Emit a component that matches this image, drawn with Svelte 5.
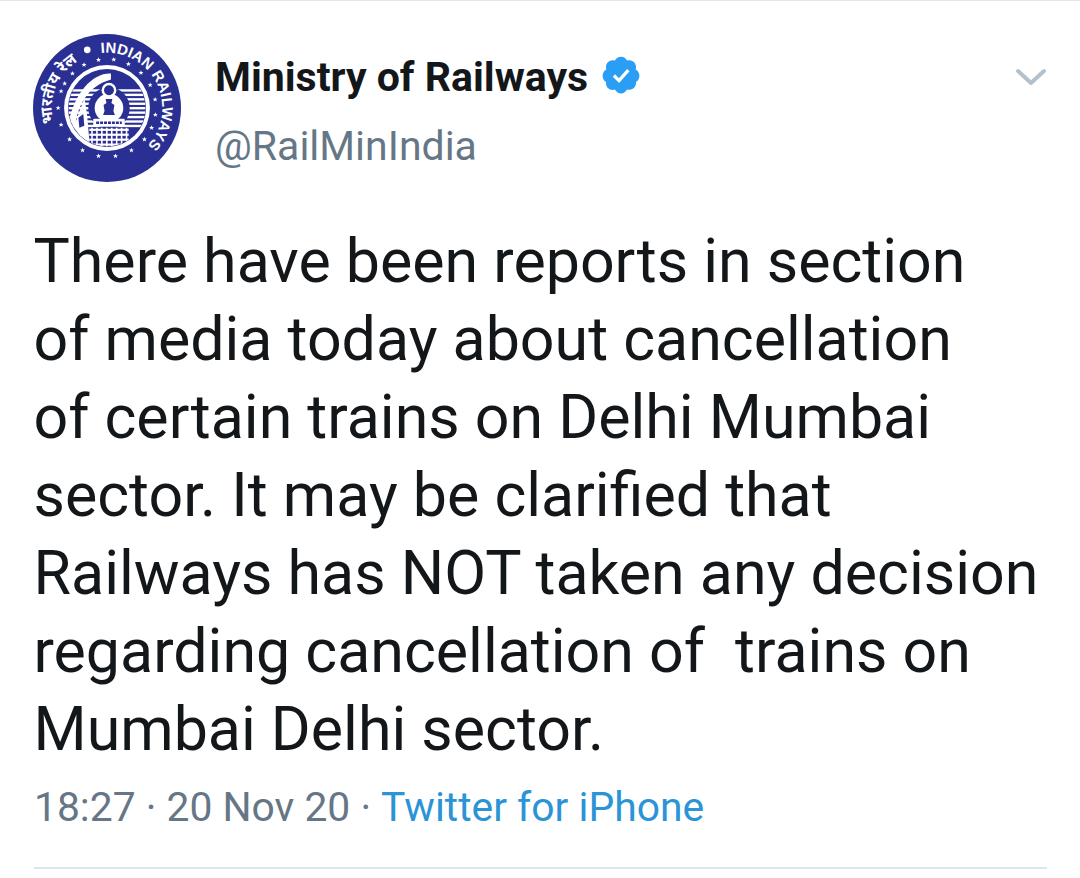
<script>
  const lines = [
    'There have been reports in section',
    'of media today about cancellation',
    'of certain trains on Delhi Mumbai',
    'sector. It may be clarified that',
    'Railways has NOT taken any decision',
    'regarding cancellation of\u00a0 trains on',
    'Mumbai Delhi sector.'
  ];
  const starAt = [-150,-135,-118,-100,-82,-64,-46,-28,-10,8,24,40,60,80,100,120,140,160,180,200];
  const stars = starAt.map((a) => {
    const r = (a * Math.PI) / 180;
    return [Math.cos(r) * 49.5, Math.sin(r) * 49.5];
  }).filter((p) => p[1] > -50 || Math.abs(p[0]) > 1);
  const star = 'M0 -2.6 L.7 -.8 L2.5 -.8 L1.1 .3 L1.6 2.1 L0 1 L-1.6 2.1 L-1.1 .3 L-2.5 -.8 L-.7 -.8 Z';
  const stripes = [-19,-14.5,-10,-5.5,-1,3.5,8,12.5,17];
  const grille = [21,26,31,36];
  const bars = [-16,-11,-6,-1,4,9,14,19];
</script>

<main class="page">
  <header class="head">
    <svg class="logo" viewBox="-76 -76 152 152" role="img" aria-label="Indian Railways logo">
      <defs>
        <path id="ring" d="M -6 -55.7 A 56 56 0 0 1 54 15 A 56 56 0 0 1 30 47" />
        <path id="ring2" d="M -53.8 15.4 A 56 56 0 0 1 -10 -55" />
        <clipPath id="inner"><circle r="39" /></clipPath>
      </defs>
      <circle r="75" fill="#2a2f93" />
      <circle cx="-20" cy="-59" r="3.4" fill="#fff" />
      <text class="ringtext"><textPath href="#ring">INDIAN RAILWAYS</textPath></text>
      <text class="hindi"><textPath href="#ring2">भारतीय रेल</textPath></text>
      {#each stars as s}
        <path d={star} transform="translate({s[0]} {s[1]})" fill="#fff" />
      {/each}
      <circle r="43.5" fill="#fff" />
      <circle r="39.5" fill="#2a2f93" />
      <g clip-path="url(#inner)">
        {#each stripes as y}
          <rect x="-41" y={y} width="82" height="2.4" fill="#fff" />
        {/each}
        <path d="M 4 -35 C -14 -36 -34 -16 -40 20 L -33 20 C -29 -4 -20 -22 4 -29 Z" fill="#fff" />
        <circle cx="2" cy="0" r="21" fill="#2a2f93" />
        <circle cx="2" cy="0" r="14.5" fill="#fff" />
        <circle cx="2" cy="-18" r="7.5" fill="#fff" />
        <circle cx="2" cy="-18" r="5" fill="#2a2f93" />
        <path d="M -1.5 -9 h7 l-1 4 l3 2 l-1 6 l1.5 4 h-12 l1.5 -4 l-1 -6 l3 -2 z" fill="#2a2f93" />
        <rect x="-14" y="11" width="32" height="8" rx="1" fill="#fff" />
        <path d="M -11 15 h26" stroke="#2a2f93" stroke-width="2.4" stroke-dasharray="3 1" />
        <rect x="-19" y="20" width="42" height="20" fill="#2a2f93" />
        {#each grille as y}
          <rect x="-18" y={y} width="40" height="2.2" fill="#fff" />
        {/each}
        {#each bars as x}
          <rect x={x} y="20" width="1.6" height="20" fill="#fff" />
        {/each}
        <path d="M -40 36 L -23 -10 C -20 2 -19 22 -17 42 L -38 42 Z" fill="#fff" />
        <path d="M -29 10 L -24 6 L -23 18 L -28 20 Z" fill="#2a2f93" />
        <path d="M -38 30 L -26 36" stroke="#2a2f93" stroke-width="1" />
      </g>
    </svg>
    <div class="who">
      <div class="nameline">
        <span class="name">Ministry of Railways</span>
        <svg class="badge" viewBox="0 0 24 24" aria-label="Verified">
          <path fill="#2a9df4" d="M22.5 12.5c0-1.58-.875-2.95-2.148-3.6.154-.435.238-.905.238-1.4 0-2.21-1.71-3.998-3.818-3.998-.47 0-.92.084-1.336.25C14.818 2.415 13.51 1.5 12 1.5s-2.816.917-3.437 2.25c-.415-.165-.866-.25-1.336-.25-2.11 0-3.818 1.79-3.818 4 0 .494.083.964.237 1.4-1.272.65-2.147 2.018-2.147 3.6 0 1.495.782 2.798 1.942 3.486-.02.17-.032.34-.032.514 0 2.21 1.708 4 3.818 4 .47 0 .92-.086 1.335-.25.62 1.334 1.926 2.25 3.437 2.25 1.512 0 2.818-.916 3.437-2.25.415.163.865.248 1.336.248 2.11 0 3.818-1.79 3.818-4 0-.174-.012-.344-.033-.513 1.158-.687 1.943-1.99 1.943-3.484z"/>
          <path fill="#fff" d="M10.9 16.6 7.3 13l1.3-1.4 2.2 2.2 4.7-5.2 1.4 1.3z"/>
        </svg>
      </div>
      <div class="handle">@RailMinIndia</div>
    </div>
    <svg class="chev" viewBox="0 0 32 20" aria-hidden="true">
      <path d="M3 4 L16 16 L29 4" fill="none" stroke="#b4c1cb" stroke-width="4" stroke-linecap="round" stroke-linejoin="round" />
    </svg>
  </header>

  <div class="body">
    {#each lines as l}
      <div class="line">{l}</div>
    {/each}
  </div>

  <div class="meta">
    <span>18:27 · 20 Nov 20 ·</span>
    <span class="src">Twitter for iPhone</span>
  </div>
  <div class="rule"></div>
</main>

<style>
  :global(body) { margin: 0; background: #fff; }
  .page {
    width: 1080px;
    height: 878px;
    box-sizing: border-box;
    border-top: 1px solid #e6e6e6;
    padding: 0 33px 0 34px;
    font-family: Roboto, "Liberation Sans", sans-serif;
    color: #14171a;
    display: flex;
    flex-direction: column;
    overflow: hidden;
  }
  .head {
    display: flex;
    align-items: flex-start;
    height: 222px;
    flex: none;
  }
  .logo {
    width: 150px;
    height: 150px;
    margin-top: 32px;
    margin-left: -2px;
    flex: none;
  }
  .ringtext {
    font: 700 15px "Liberation Sans", sans-serif;
    fill: #fff;
    letter-spacing: 0.2px;
  }
  .hindi {
    font: 700 16px "Noto Sans", "DejaVu Sans", sans-serif;
    fill: #fff;
  }
  .who {
    margin-left: 33px;
    flex: 1;
    padding-top: 52px;
  }
  .nameline {
    display: flex;
    align-items: center;
    gap: 12px;
    height: 48px;
  }
  .name {
    font-size: 41px;
    font-weight: 700;
  }
  .badge { width: 42px; height: 42px; margin-top: -4px; }
  .handle {
    margin-top: 21px;
    font-size: 41px;
    line-height: 48px;
    color: #657786;
  }
  .chev {
    width: 32px;
    height: 20px;
    margin-top: 66px;
    flex: none;
  }
  .body {
    font-size: 60.9px;
    line-height: 78px;
    margin-left: -0.5px;
    flex: none;
  }
  .line { white-space: nowrap; }
  .meta {
    margin-top: 14px;
    font-size: 40.8px;
    line-height: 48px;
    color: #657786;
    display: flex;
    gap: 10px;
    white-space: pre;
  }
  .src { color: #2b94d6; }
  .rule {
    margin-top: 36px;
    height: 2px;
    background: #e1e5e8;
    flex: none;
  }
</style>
